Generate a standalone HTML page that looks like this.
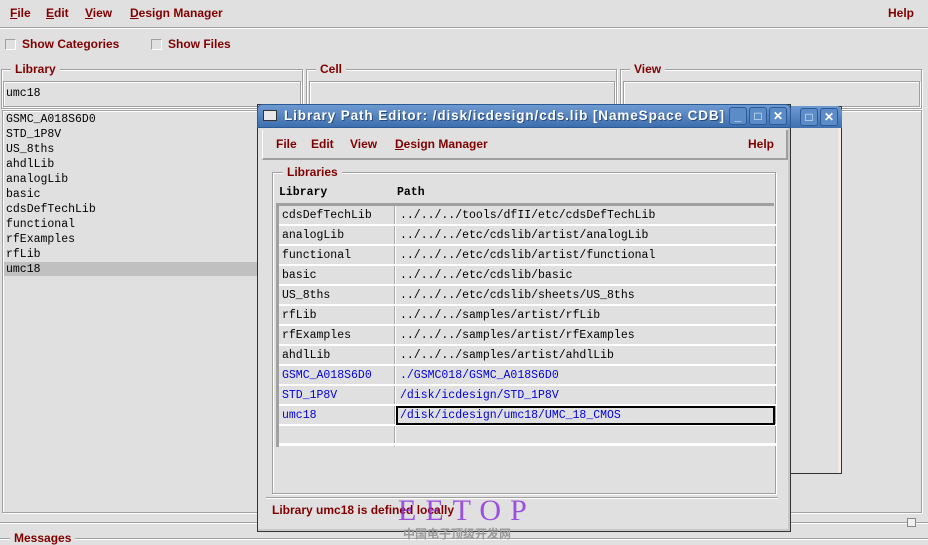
<!DOCTYPE html>
<html><head><style>
*{margin:0;padding:0;box-sizing:border-box}
body{width:928px;height:544px;background:#e0e0e0;position:relative;overflow:hidden;font-family:"Liberation Sans",sans-serif}
.a{position:absolute}
.m{color:#800000;font-weight:bold;font-size:12px;position:absolute;white-space:nowrap}
.u{text-decoration:underline}
.mono{font-family:"Liberation Mono",monospace;font-size:11.5px;position:absolute;white-space:nowrap;color:#000}
.grp{position:absolute;border:1px solid #a0a0a0;box-shadow:1px 1px 0 #fff inset,1px 1px 0 #fff}
.lbl{position:absolute;background:#e0e0e0;padding:0 4px;color:#800000;font-weight:bold;font-size:12px}
.inp{position:absolute;border:1px solid #a0a0a0;box-shadow:inset 1px 1px 0 #fff,1px 1px 0 #fff}
.cb{position:absolute;width:11px;height:11px;border:1px solid #a0a0a0;border-right-color:#fff;border-bottom-color:#fff;background:#e0e0e0}
.row{position:absolute;left:0;width:497px;height:20px;border-bottom:2px solid #fff;font-family:"Liberation Mono",monospace;font-size:11.5px;white-space:nowrap}
.c1{position:absolute;left:3px;top:3px}
.c2{position:absolute;left:121px;top:3px}
.tb{position:absolute;width:18px;height:18px;border:1px solid #2c5a94;border-radius:3px;background:#5b8cc8;color:#fff;font-size:12px;font-weight:bold;text-align:center;line-height:16px}
</style></head><body>
<div class="m" style="left:10px;top:6px"><span class="u">F</span>ile</div>
<div class="m" style="left:46px;top:6px"><span class="u">E</span>dit</div>
<div class="m" style="left:85px;top:6px"><span class="u">V</span>iew</div>
<div class="m" style="left:130px;top:6px"><span class="u">D</span>esign Manager</div>
<div class="m" style="left:888px;top:6px">Help</div>
<div class="a" style="left:0;top:27px;width:928px;height:2px;border-top:1px solid #a0a0a0;border-bottom:1px solid #fff"></div>
<div class="cb" style="left:5px;top:39px"></div>
<div class="m" style="left:22px;top:37px">Show Categories</div>
<div class="cb" style="left:151px;top:39px"></div>
<div class="m" style="left:168px;top:37px">Show Files</div>
<div class="grp" style="left:1px;top:69px;width:302px;height:40px"></div>
<div class="lbl" style="left:11px;top:62px">Library</div>
<div class="inp" style="left:3px;top:81px;width:298px;height:26px"></div>
<div class="mono" style="left:6px;top:87px">umc18</div>
<div class="grp" style="left:306px;top:69px;width:311px;height:40px"></div>
<div class="lbl" style="left:316px;top:62px">Cell</div>
<div class="inp" style="left:309px;top:81px;width:306px;height:26px"></div>
<div class="grp" style="left:620px;top:69px;width:302px;height:40px"></div>
<div class="lbl" style="left:630px;top:62px">View</div>
<div class="inp" style="left:623px;top:81px;width:297px;height:26px"></div>
<div class="inp" style="left:2px;top:110px;width:300px;height:403px"></div>
<div class="a" style="left:4px;top:262px;width:256px;height:14px;background:#c0c0c0"></div>
<div class="mono" style="left:6px;top:112px;line-height:15px">GSMC_A018S6D0<br>STD_1P8V<br>US_8ths<br>ahdlLib<br>analogLib<br>basic<br>cdsDefTechLib<br>functional<br>rfExamples<br>rfLib<br>umc18</div>
<div class="inp" style="left:620px;top:110px;width:302px;height:403px"></div>
<div class="a" style="left:0;top:522px;width:928px;height:2px;border-top:1px solid #a0a0a0;border-bottom:1px solid #fff"></div>
<div class="a" style="left:0;top:538px;width:928px;height:2px;border-top:1px solid #a0a0a0;border-bottom:1px solid #fff"></div>
<div class="lbl" style="left:10px;top:531px">Messages</div>
<div class="a" style="left:907px;top:518px;width:9px;height:9px;border:1px solid #888;background:#f0f0f0"></div>
<div class="a" style="left:258px;top:106px;width:584px;height:368px;background:#e0e0e0;border:1px solid #333"></div>
<div class="a" style="left:258px;top:106px;width:584px;height:22px;background:linear-gradient(#6e9ad2,#3f70b0);border-radius:5px 5px 0 0"></div>
<div class="a" style="left:838px;top:128px;width:3px;height:345px;background:#f0ece4"></div>
<div class="tb" style="left:800px;top:108px">□</div>
<div class="tb" style="left:820px;top:108px">✕</div>
<div class="a" style="left:257px;top:104px;width:534px;height:428px;background:#e0e0e0;border:1px solid #333;box-shadow:inset -2px -2px 0 #c8c8c8"></div>
<div class="a" style="left:257px;top:104px;width:534px;height:24px;background:linear-gradient(#6e9ad2,#3d6eae);border-radius:5px 5px 0 0;border:1px solid #2c5a94"></div>
<div class="a" style="left:263px;top:110px;width:14px;height:11px;background:#e8e8e8;border:1px solid #333"></div>
<div class="a" style="left:284px;top:108px;color:#fff;font-weight:bold;font-size:13.5px;letter-spacing:0.9px;white-space:nowrap;text-shadow:1px 1px 0 #2a4a78;width:443px;overflow:hidden">Library Path Editor: /disk/icdesign/cds.lib [NameSpace CDB]</div>
<div class="tb" style="left:729px;top:107px">_</div>
<div class="tb" style="left:749px;top:107px">□</div>
<div class="tb" style="left:769px;top:107px">✕</div>
<div class="a" style="left:262px;top:130px;width:526px;height:30px;border-right:2px solid #a0a0a0;border-bottom:2px solid #a0a0a0;border-left:1px solid #fff"></div>
<div class="m" style="left:276px;top:137px">File</div>
<div class="m" style="left:311px;top:137px">Edit</div>
<div class="m" style="left:350px;top:137px">View</div>
<div class="m" style="left:395px;top:137px"><span class="u">D</span>esign Manager</div>
<div class="m" style="left:748px;top:137px">Help</div>
<div class="grp" style="left:272px;top:172px;width:504px;height:322px"></div>
<div class="lbl" style="left:283px;top:165px">Libraries</div>
<div class="mono" style="left:279px;top:186px;font-weight:bold">Library</div>
<div class="mono" style="left:397px;top:186px;font-weight:bold">Path</div>
<div class="a" style="left:276px;top:203px;width:498px;height:244px;background:#e0e0e0;border-left:3px solid #a0a0a0;border-top:3px solid #a0a0a0">
<div class="a" style="left:115px;top:0;width:2px;height:241px;background:#fff;border-left:1px solid #a8a8a8"></div>
<div class="row" style="top:0"><span class="c1">cdsDefTechLib</span><span class="c2">../../../tools/dfII/etc/cdsDefTechLib</span></div>
<div class="row" style="top:20px"><span class="c1">analogLib</span><span class="c2">../../../etc/cdslib/artist/analogLib</span></div>
<div class="row" style="top:40px"><span class="c1">functional</span><span class="c2">../../../etc/cdslib/artist/functional</span></div>
<div class="row" style="top:60px"><span class="c1">basic</span><span class="c2">../../../etc/cdslib/basic</span></div>
<div class="row" style="top:80px"><span class="c1">US_8ths</span><span class="c2">../../../etc/cdslib/sheets/US_8ths</span></div>
<div class="row" style="top:100px"><span class="c1">rfLib</span><span class="c2">../../../samples/artist/rfLib</span></div>
<div class="row" style="top:120px"><span class="c1">rfExamples</span><span class="c2">../../../samples/artist/rfExamples</span></div>
<div class="row" style="top:140px"><span class="c1">ahdlLib</span><span class="c2">../../../samples/artist/ahdlLib</span></div>
<div class="row" style="top:160px;color:#0000e0"><span class="c1">GSMC_A018S6D0</span><span class="c2">./GSMC018/GSMC_A018S6D0</span></div>
<div class="row" style="top:180px;color:#0000e0"><span class="c1">STD_1P8V</span><span class="c2">/disk/icdesign/STD_1P8V</span></div>
<div class="row" style="top:200px;color:#0000e0"><span class="c1">umc18</span><span class="c2">/disk/icdesign/umc18/UMC_18_CMOS</span></div>
<div class="a" style="left:117px;top:200px;width:379px;height:19px;border:2px solid #000"></div>
<div class="row" style="top:220px;border-bottom:3px solid #fff"></div>
</div>
<div class="a" style="left:266px;top:497px;width:512px;height:2px;border-top:1px solid #a0a0a0;border-bottom:1px solid #fff"></div>
<div class="m" style="left:272px;top:503px">Library umc18 is defined locally</div>
<div class="a" style="left:398px;top:494px;color:#8a2be2;font-family:'Liberation Serif',serif;font-size:30px;letter-spacing:9px;opacity:.8">EETOP</div>
<div class="a" style="left:403px;top:525px;color:#999;font-family:'Liberation Sans','Noto Sans CJK SC',sans-serif;font-size:12px;font-weight:bold">中国电子顶级开发网</div>
</body></html>
